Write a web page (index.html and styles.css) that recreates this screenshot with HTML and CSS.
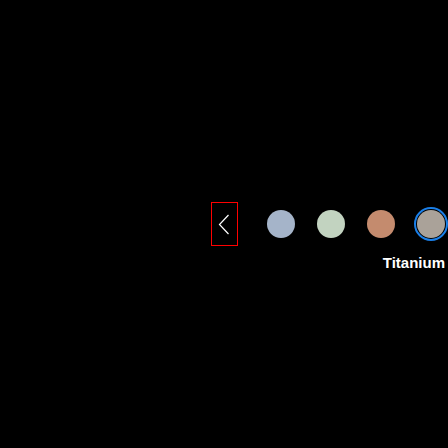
FILE: index.html
```html
<!DOCTYPE html>
<html>
<head>
<meta charset="utf-8">
<link rel="stylesheet" href="styles.css">
</head>
<body>
<div class="picker">
  <div class="row">
    <div class="prev" role="button" aria-label="Previous">
      <svg width="12" height="21" viewBox="0 0 12 21"><path d="M10.5 1 L1.5 10.5 L10.5 20" fill="none" stroke="#fff" stroke-width="1.2"/></svg>
    </div>
    <div class="swatches">
      <span class="swatch"><span class="dot c1"></span></span>
      <span class="swatch"><span class="dot c2"></span></span>
      <span class="swatch"><span class="dot c3"></span></span>
      <span class="swatch selected"><span class="dot c4"></span></span>
    </div>
  </div>
  <div class="label">Titanium</div>
</div>
</body>
</html>
```
FILE: styles.css
```css
html, body {
  margin: 0;
  padding: 0;
  background: #000;
  width: 448px;
  height: 448px;
  overflow: hidden;
}
.picker {
  padding-top: 202px;
  padding-left: 211px;
  font-family: "Liberation Sans", Arial, sans-serif;
  color: #fff;
}
.row {
  display: flex;
  align-items: center;
}
.prev {
  box-sizing: border-box;
  width: 28px;
  height: 44px;
  border: 1px solid #ff0000;
  display: flex;
  align-items: center;
  justify-content: center;
  cursor: pointer;
}
.prev svg {
  display: block;
  margin-left: -1px;
}
.swatches {
  display: flex;
  gap: 16px;
  margin-left: 26px;
}
.swatch {
  box-sizing: border-box;
  width: 34px;
  height: 34px;
  border-radius: 50%;
  display: flex;
  align-items: center;
  justify-content: center;
  border: 2px solid transparent;
}
.swatch.selected {
  border-color: #1a7fe8;
}
.dot {
  width: 28px;
  height: 28px;
  border-radius: 50%;
  display: block;
}
.c1 { background: #a5b4c9; }
.c2 { background: #c2d3c0; }
.c3 { background: #c48b6e; }
.c4 { background: #aaa299; }
.label {
  display: flex;
  justify-content: flex-end;
  padding-right: 3px;
  margin-top: 8px;
  font-size: 15px;
  font-weight: bold;
  line-height: 18px;
}
```
